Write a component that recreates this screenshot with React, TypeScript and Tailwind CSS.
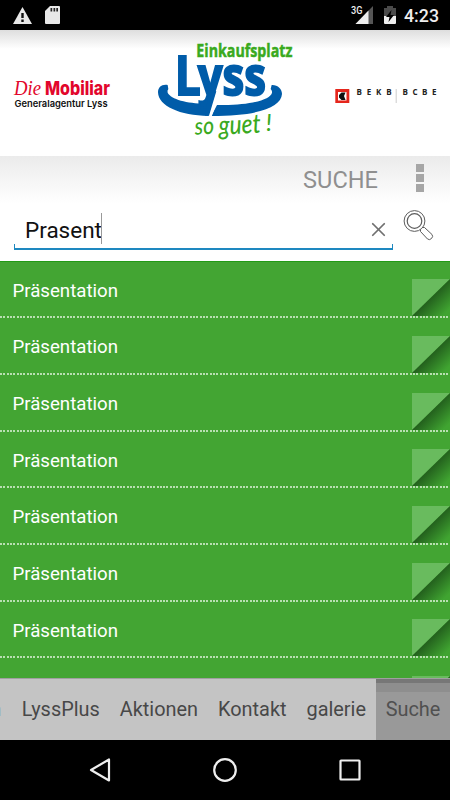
import { X } from 'lucide-react'

const results = [
  { id: 1, title: 'Präsentation', height: 'h-[56px]' },
  { id: 2, title: 'Präsentation', height: 'h-[57px]' },
  { id: 3, title: 'Präsentation', height: 'h-[57px]' },
  { id: 4, title: 'Präsentation', height: 'h-[56px]' },
  { id: 5, title: 'Präsentation', height: 'h-[57px]' },
  { id: 6, title: 'Präsentation', height: 'h-[57px]' },
  { id: 7, title: 'Präsentation', height: 'h-[56px]' },
  { id: 8, title: '', height: 'h-[57px]' },
]

function StatusBar() {
  return (
    <div className="h-[30px] shrink-0 bg-black flex items-center justify-between pl-[13px] pr-[11px]">
      <div className="flex items-center gap-[13px]">
        <svg width="19" height="17" viewBox="0 0 19 17">
          <path d="M9.5 0L19 17H0z" fill="#e8e8e8" />
          <path d="M8.3 6h2.4v5H8.3zM8.3 12.5h2.4V15H8.3z" fill="#111" />
        </svg>
        <svg width="15" height="18" viewBox="0 0 15 18">
          <path d="M5 0h9q1 0 1 1v16q0 1-1 1H1q-1 0-1-1V5z" fill="#e8e8e8" />
          <path d="M5.5 2h1.7v3.5H5.5zM8.5 2h1.7v3.5H8.5zM11.3 2H13v3.5h-1.7z" fill="#222" />
        </svg>
      </div>
      <div className="flex items-center text-[#eee]">
        <svg width="24" height="20" viewBox="0 0 24 20">
          <path d="M23 1v18H5.5z" fill="#555" />
          <path d="M18.5 5.5V19h-13z" fill="#eee" />
          <text x="1" y="9" fontSize="10.5" fontFamily="Roboto, sans-serif" fontWeight="500" fill="#eee" textLength="11.5" lengthAdjust="spacingAndGlyphs">3G</text>
        </svg>
        <svg width="14" height="18" viewBox="0 0 14 18" className="ml-[9px]">
          <path d="M4 0h6v2h3v8H1V2h3z" fill="#4a4a4a" />
          <path d="M1 10h12v7q0 1-1 1H2q-1 0-1-1z" fill="#eee" />
          <path d="M8.5 4L3 11h3.5L5.5 16 11 9H7.5z" fill="#000" />
        </svg>
        <span className="ml-[7px] pt-[2px] text-[17.8px] leading-[28px] font-medium">4:23</span>
      </div>
    </div>
  )
}

function LyssLogo() {
  return (
    <svg width="160" height="125" viewBox="0 0 480 375" fontFamily="'Open Sans', sans-serif">
      <text x="154" y="82" fontSize="54" fontWeight="700" fill="#3aaa1e" stroke="#3aaa1e" strokeWidth="1.5" textLength="288" lengthAdjust="spacingAndGlyphs">Einkaufsplatz</text>
      <g fill="#005ca9">
        <path d="M68 165C50 162 39 172 39 187C40 228 105 257 190 258L201 220C140 224 79 210 68 188Q66 182 70 177z" />
        <path d="M380 165C398 164 411 177 411 192C408 232 340 258 199 258L216 225C310 228 376 210 381 188Q382 182 377 177z" />
        <g stroke="#005ca9" strokeWidth="6">
          <text x="89" y="194" fontSize="160" fontWeight="700" textLength="78" lengthAdjust="spacingAndGlyphs">L</text>
          <text x="158" y="194" fontSize="160" fontWeight="700" textLength="205" lengthAdjust="spacingAndGlyphs">yss</text>
        </g>
        <path d="M190 180L214 184L192 257H180L187 215z" />
      </g>
      <path d="M215 212L197 260" stroke="#fff" strokeWidth="5" />
      <g fill="#3aaa1e" fontFamily="Lato, sans-serif" fontStyle="italic" fontWeight="500" transform="rotate(-3 150 314)">
        <text x="150" y="314" fontSize="72" textLength="58" lengthAdjust="spacingAndGlyphs">so</text>
        <text x="222" y="318" fontSize="80" textLength="126" lengthAdjust="spacingAndGlyphs">guet</text>
        <text x="364" y="314" fontSize="70">!</text>
      </g>
    </svg>
  )
}

function SponsorHeader() {
  return (
    <div className="h-[126px] shrink-0 flex justify-between bg-linear-to-b from-[#dedede] via-white via-15% to-white">
      <svg width="145" height="125" viewBox="0 0 145 125">
        <text x="14" y="65" fontSize="21" fontStyle="italic" fontFamily="'Liberation Serif', serif" fill="#e2062c" textLength="27" lengthAdjust="spacingAndGlyphs">Die</text>
        <text x="45" y="65" fontSize="19" fontWeight="800" fontFamily="Inter, sans-serif" fill="#e2062c" textLength="65" lengthAdjust="spacingAndGlyphs">Mobiliar</text>
        <text x="14.5" y="77" fontSize="9.5" fontWeight="600" fontFamily="Inter, sans-serif" fill="#111" textLength="93" lengthAdjust="spacingAndGlyphs">Generalagentur Lyss</text>
      </svg>
      <LyssLogo />
      <svg width="145" height="125" viewBox="305 30 145 125" fontFamily="'Open Sans', sans-serif">
        <path d="M335.3 89h14v14h-14z" fill="#e5261c" />
        <path d="M338 92h8.5v8.5H338z" fill="#fff" />
        <path d="M341.5 92.5h4l-1.5 3.5 1.5 4h-4L339 97.5v-2.500z" fill="#111" />
        <path d="M396.2 89v14" stroke="#ccc" />
        <text x="356.5" y="95" fontSize="8" fontWeight="700" fill="#222" textLength="35">BEKB</text>
        <text x="402.5" y="95" fontSize="8" fontWeight="700" fill="#222" textLength="34">BCBE</text>
      </svg>
    </div>
  )
}

function SearchPanel() {
  return (
    <div className="h-[105px] shrink-0 flex flex-col bg-linear-to-b from-[#ebebeb] via-white via-45% to-white">
      <div className="h-[48px] flex items-center justify-end pr-[26px]">
        <span className="text-[23.6px] leading-[48px] text-[#8f8f8f]">SUCHE</span>
        <div className="ml-[38px] mt-[-4px] flex flex-col gap-[2px]">
          <span className="size-[8px] bg-[#a6a6a6]" />
          <span className="size-[8px] bg-[#a6a6a6]" />
          <span className="size-[8px] bg-[#a6a6a6]" />
        </div>
      </div>
      <div className="flex pl-[14px]">
        <div className="w-[379px] h-[46px] flex flex-col">
          <div className="h-[40px] flex items-center pl-[11px] pr-[3px] pt-[12px]">
            <span className="text-[22.5px] leading-[30px] text-[#111]">Prasent</span>
            <span className="w-px h-[31px] -mt-[3px] -ml-px bg-[#999]" />
            <X className="ml-auto -mt-px size-[23px] text-[#707070]" strokeWidth={1.8} />
          </div>
          <div className="h-[6px] border-x border-b-2 border-[#1e88c0]" />
        </div>
        <svg width="32" height="32" viewBox="0 0 32 32" fill="none" stroke="#5c5c5c" strokeWidth="1" className="ml-[10px] mt-[6px]">
          <circle cx="11.5" cy="11" r="10.4" />
          <circle cx="11.5" cy="11" r="7.3" strokeWidth="1.2" />
          <path d="M17.5 19.5v2l7 7.5q2 1.500 4-.5t.5-4l-7.500-7h-2" />
        </svg>
      </div>
    </div>
  )
}

function ResultRow({ title, height }: { title: string; height: string }) {
  return (
    <div className={`${height} shrink-0 flex flex-col`}>
      <div className="flex-1 min-h-0 flex justify-between pl-[12.5px]">
        <span className="text-[18.65px] leading-[58px] text-white">{title}</span>
        <svg width="38" height="37" viewBox="0 0 38 37" className="self-end">
          <defs>
            <linearGradient id="fold" x1="19" y1="18.5" x2="34" y2="33.5" gradientUnits="userSpaceOnUse">
              <stop offset="0" stopColor="#23601d" />
              <stop offset="1" stopColor="#40a431" />
            </linearGradient>
          </defs>
          <path d="M0 0h38L0 37z" fill="#69bb5e" />
          <path d="M38 0v37H0z" fill="url(#fold)" />
        </svg>
      </div>
      <div className="h-[2px] shrink-0 bg-[repeating-linear-gradient(90deg,#b8dfb1_0_2px,#43a533_2px_3.33px)]" />
    </div>
  )
}

function TabBar() {
  return (
    <div className="h-[62px] shrink-0 flex justify-end bg-[#c4c4c4] border-t border-[#a0a0a0] text-[19.9px] leading-[62px] text-[#484848] overflow-hidden">
      <span className="mr-[20.5px]">n</span>
      <span className="mr-[20px]">LyssPlus</span>
      <span className="mr-[20px]">Aktionen</span>
      <span className="mr-[20px]">Kontakt</span>
      <span className="mr-[10px]">galerie</span>
      <span className="w-[74px] shrink-0 text-center bg-[linear-gradient(#777_0_4px,#8e8e8e_4px_13px,#999_13px)] text-[#505050]">Suche</span>
    </div>
  )
}

function NavBar() {
  return (
    <div className="h-[60px] shrink-0 bg-black">
      <svg width="450" height="60" viewBox="0 0 450 60" fill="none" stroke="#eee" strokeWidth="2.2" strokeLinejoin="round">
        <path d="M109 19.5v21L91 30z" />
        <circle cx="225" cy="30" r="10.8" />
        <rect x="340.5" y="20.5" width="19" height="19" rx="0.5" />
      </svg>
    </div>
  )
}

export default function App() {
  return (
    <div className="w-[450px] h-[800px] flex flex-col overflow-hidden bg-white font-['Roboto',sans-serif]">
      <StatusBar />
      <SponsorHeader />
      <SearchPanel />
      <div className="flex-1 min-h-0 flex flex-col overflow-hidden bg-[#43a533] border-t border-[#229a16]">
        {results.map((r) => (
          <ResultRow key={r.id} title={r.title} height={r.height} />
        ))}
      </div>
      <TabBar />
      <NavBar />
    </div>
  )
}
